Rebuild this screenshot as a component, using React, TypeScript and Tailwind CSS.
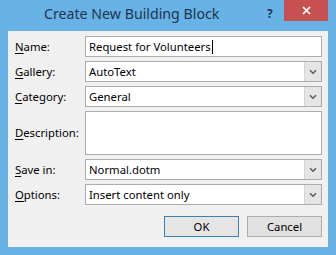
import React from "react";

const font = { fontFamily: '"Noto Sans", "Open Sans", sans-serif' };

function Label({ k, rest }: { k: string; rest: string }) {
  return (
    <div className="flex items-center text-[11.3px] text-black leading-none">
      <span className="underline underline-offset-[2px] decoration-[1px]">{k}</span>
      <span>{rest}</span>
    </div>
  );
}

function Chevron() {
  return (
    <svg width="8" height="6" viewBox="0 0 8 6">
      <path d="M1 1.2 L4 4.2 L7 1.2" fill="none" stroke="#5a5a5a" strokeWidth="1.5" />
    </svg>
  );
}

function Combo({ value }: { value: string }) {
  return (
    <div className="h-[21px] flex border border-[#acacac] bg-white">
      <div className="flex-1 flex items-center pl-[3px] text-[11.3px] text-black leading-none">{value}</div>
      <div className="w-[17px] bg-[#e5e5e5] border-l border-[#d4d4d4] flex items-center justify-center">
        <Chevron />
      </div>
    </div>
  );
}

export default function App() {
  return (
    <div className="w-[336px] h-[255px] bg-[#68b2e6] flex flex-col" style={font}>
      <div className="h-[31px] relative shrink-0">
        <div className="absolute left-[44px] top-[7px] text-[14.2px] text-[#1f3550] leading-none whitespace-nowrap">
          Create New Building Block
        </div>
        <div className="absolute left-[267px] top-[5px] text-[12px] font-bold text-[#1f3550]">?</div>
        <div className="absolute left-[284px] top-0 w-[44px] h-[21px] bg-[#c75050] flex items-center justify-center">
          <svg width="9" height="9" viewBox="0 0 9 9">
            <path d="M1 1 L8 8 M8 1 L1 8" stroke="#fff" strokeWidth="1.7" />
          </svg>
        </div>
      </div>
      <div className="mx-[8px] h-[216px] bg-[#f0f0f0] pt-[5px] pl-[7px] pr-[6px] flex flex-col">
        <div className="grid grid-cols-[70px_1fr] gap-y-[4px]">
          <Label k="N" rest="ame:" />
          <div className="h-[21px] border border-[#abadb3] bg-white flex items-center pl-[3px] text-[11.3px] text-black leading-none">
            Request for Volunteers<span className="inline-block w-[1px] h-[14px] bg-black ml-[1px]" />
          </div>
          <Label k="G" rest="allery:" />
          <Combo value="AutoText" />
          <Label k="C" rest="ategory:" />
          <Combo value="General" />
          <Label k="D" rest="escription:" />
          <div className="h-[44px] border border-[#abadb3] bg-white" />
          <Label k="S" rest="ave in:" />
          <Combo value="Normal.dotm" />
          <Label k="O" rest="ptions:" />
          <Combo value="Insert content only" />
        </div>
        <div className="flex justify-end gap-[8px] mt-[11px]">
          <div className="w-[75px] h-[21px] border border-[#3c7fb1] bg-[#e5e5e5] flex items-center justify-center text-[11.3px] text-black leading-none">
            OK
          </div>
          <div className="w-[75px] h-[21px] border border-[#adadad] bg-[#e1e1e1] flex items-center justify-center text-[11.3px] text-black leading-none">
            Cancel
          </div>
        </div>
      </div>
    </div>
  );
}
